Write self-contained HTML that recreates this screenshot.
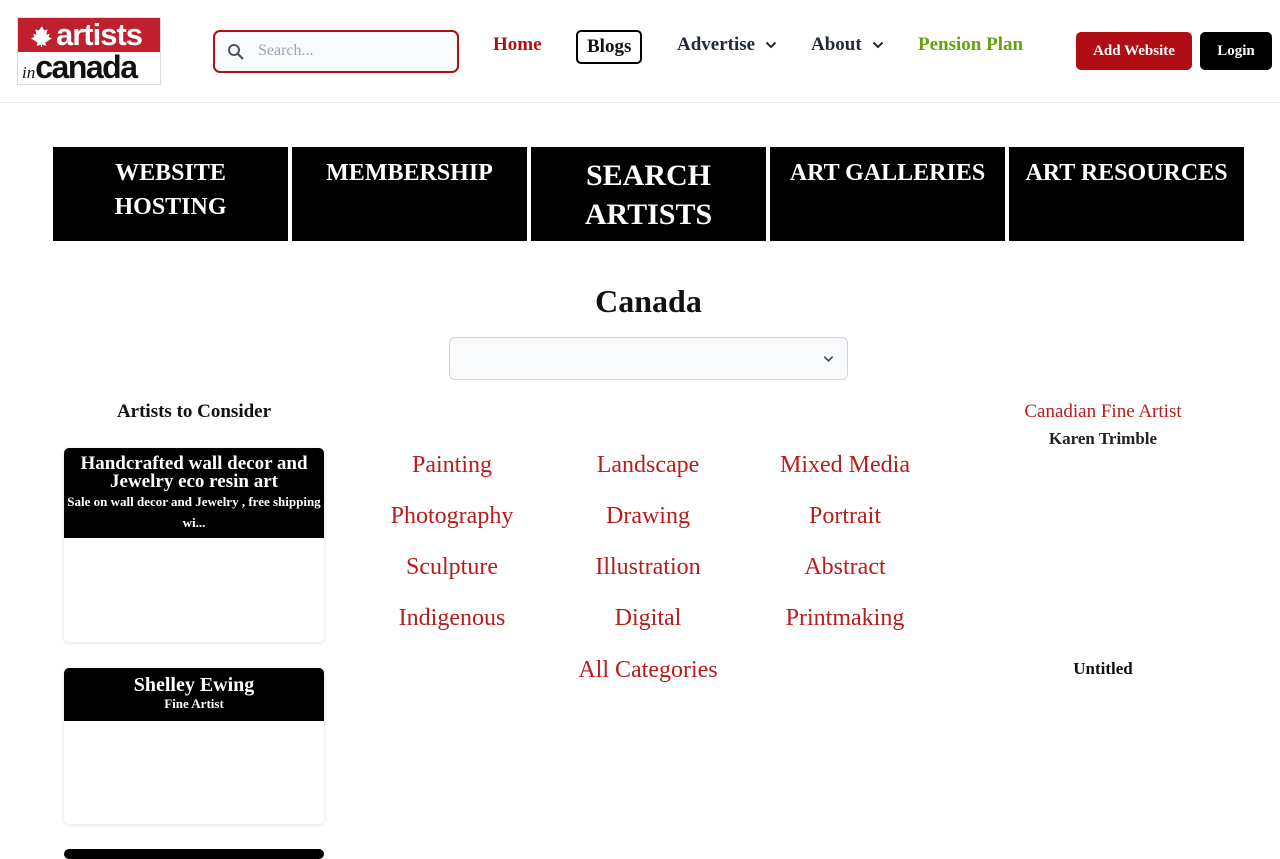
<!DOCTYPE html>
<html><head><meta charset="utf-8"><style>
*{box-sizing:border-box;margin:0;padding:0}
body{width:1280px;height:853px;overflow:hidden;background:#fff;font-family:"Liberation Serif",serif;position:relative}
.abs{position:absolute}
.nav{font-weight:bold;font-size:19px;color:#1f2937}
.tile{position:absolute;top:147px;width:235px;height:94px;background:#000;color:#fff;font-weight:bold;text-align:center;font-size:24px;line-height:34px;padding-top:9px}
.cat{position:absolute;color:#b91c1c;font-size:24px;text-align:center;width:196px}
.card{position:absolute;left:64px;width:260px;background:#fff;border-radius:5px;box-shadow:0 1px 4px rgba(0,0,0,.12);overflow:hidden}
.card .h{background:#000;color:#fff;text-align:center;font-weight:bold}
</style></head><body>
<div class="abs" style="left:17px;top:17px;width:144px;height:68px;border:1px solid #ddd;overflow:hidden">
 <div style="height:34px;background:#c0202e;color:#fff;font:bold 31px/34px 'Liberation Sans',sans-serif;padding-left:10px;letter-spacing:-1px;position:relative">
  <svg style="position:absolute;left:13px;top:7px" width="22" height="22" viewBox="0 0 20 20"><path d="M10 1l2 4 3-1-1 5 3-1-1 3 3 1-6 4 1 3-4-1v3h-1v-3l-4 1 1-3-6-4 3-1-1-3 3 1-1-5 3 1z" fill="#fff"/></svg>
  <span style="position:absolute;left:38px;top:0">artists</span></div>
 <div style="height:33px;color:#111;font:bold 32px/30px 'Liberation Sans',sans-serif;padding-left:4px;letter-spacing:-1.5px"><i style="font:italic 17px 'Liberation Serif';letter-spacing:0">in</i>canada</div>
</div>
<div class="abs" style="left:213px;top:30px;width:246px;height:43px;border:2px solid #b00e14;border-radius:7px;background:#f8fafc">
 <svg class="abs" style="left:12px;top:11px" width="18" height="18" viewBox="0 0 18 18"><circle cx="7" cy="7" r="5" stroke="#4b5563" stroke-width="2" fill="none"/><path d="M11 11l5 5" stroke="#4b5563" stroke-width="2.2"/></svg>
 <span class="abs" style="left:43px;top:10px;color:#9ca3af;font-size:16px">Search...</span>
</div>
<div class="abs nav" style="left:493px;top:34px;color:#b00e14">Home</div>
<div class="abs nav" style="left:576px;top:30px;border:2px solid #000;border-radius:5px;padding:4px 9px;color:#111">Blogs</div>
<div class="abs nav" style="left:677px;top:34px">Advertise</div>
<svg class="abs" style="left:765px;top:41px" width="12" height="8" viewBox="0 0 12 8"><path d="M1.5 1.5l4.5 4.5 4.5-4.5" stroke="#1f2937" stroke-width="2" fill="none"/></svg>
<div class="abs nav" style="left:811px;top:34px">About</div>
<svg class="abs" style="left:872px;top:41px" width="12" height="8" viewBox="0 0 12 8"><path d="M1.5 1.5l4.5 4.5 4.5-4.5" stroke="#1f2937" stroke-width="2" fill="none"/></svg>
<div class="abs nav" style="left:918px;top:34px;color:#65a30d">Pension Plan</div>
<div class="abs" style="left:1076px;top:32px;width:116px;height:38px;background:#b00e14;border-radius:5px;color:#fff;font-weight:bold;font-size:15px;text-align:center;line-height:38px">Add Website</div>
<div class="abs" style="left:1200px;top:32px;width:72px;height:38px;background:#000;border-radius:5px;color:#fff;font-weight:bold;font-size:15px;text-align:center;line-height:38px">Login</div>
<div class="abs" style="left:0;top:102px;width:1280px;height:1px;background:#eee"></div>
<div class="tile" style="left:53px">WEBSITE<br>HOSTING</div>
<div class="tile" style="left:292px">MEMBERSHIP</div>
<div class="tile" style="left:531px;font-size:30px;line-height:39px">SEARCH<br>ARTISTS</div>
<div class="tile" style="left:770px">ART GALLERIES</div>
<div class="tile" style="left:1009px">ART RESOURCES</div>
<div class="abs" style="left:0;width:1297px;top:283px;text-align:center;font-weight:bold;font-size:32px;color:#111">Canada</div>
<div class="abs" style="left:449px;top:337px;width:399px;height:43px;border:1px solid #d1d5db;border-radius:6px;background:#f8fafc">
<svg class="abs" style="right:13px;top:17px" width="11" height="8" viewBox="0 0 12 8"><path d="M1.5 1.5l4.5 4.5 4.5-4.5" stroke="#444" stroke-width="1.8" fill="none"/></svg></div>
<div class="abs" style="left:64px;width:260px;top:401px;text-align:center;font-weight:bold;font-size:19px;color:#111">Artists to Consider</div>
<div class="card" style="top:448px;height:194px"><div class="h" style="height:90px;padding-top:7px"><div style="font-size:19px;line-height:18px">Handcrafted wall decor and Jewelry eco resin art</div><div style="font-size:13px;line-height:21px">Sale on wall decor and Jewelry , free shipping wi...</div></div></div>
<div class="card" style="top:668px;height:156px"><div class="h" style="height:53px;padding-top:6px"><div style="font-size:20px;line-height:22px">Shelley Ewing</div><div style="font-size:13px">Fine Artist</div></div></div>
<div class="abs" style="left:64px;top:849px;width:260px;height:10px;background:#000;border-radius:5px"></div>
<div class="cat" style="left:354px;top:452px">Painting</div>
<div class="cat" style="left:550px;top:452px">Landscape</div>
<div class="cat" style="left:747px;top:452px">Mixed Media</div>
<div class="cat" style="left:354px;top:503px">Photography</div>
<div class="cat" style="left:550px;top:503px">Drawing</div>
<div class="cat" style="left:747px;top:503px">Portrait</div>
<div class="cat" style="left:354px;top:554px">Sculpture</div>
<div class="cat" style="left:550px;top:554px">Illustration</div>
<div class="cat" style="left:747px;top:554px">Abstract</div>
<div class="cat" style="left:354px;top:605px">Indigenous</div>
<div class="cat" style="left:550px;top:605px">Digital</div>
<div class="cat" style="left:747px;top:605px">Printmaking</div>
<div class="cat" style="left:550px;top:657px">All Categories</div>
<div class="abs" style="left:983px;width:240px;top:401px;text-align:center;color:#b91c1c;font-size:19px">Canadian Fine Artist</div>
<div class="abs" style="left:983px;width:240px;top:429px;text-align:center;font-weight:bold;font-size:17px;color:#222">Karen Trimble</div>
<div class="abs" style="left:983px;width:240px;top:659px;text-align:center;font-weight:bold;font-size:17px;color:#111">Untitled</div>
</body></html>
